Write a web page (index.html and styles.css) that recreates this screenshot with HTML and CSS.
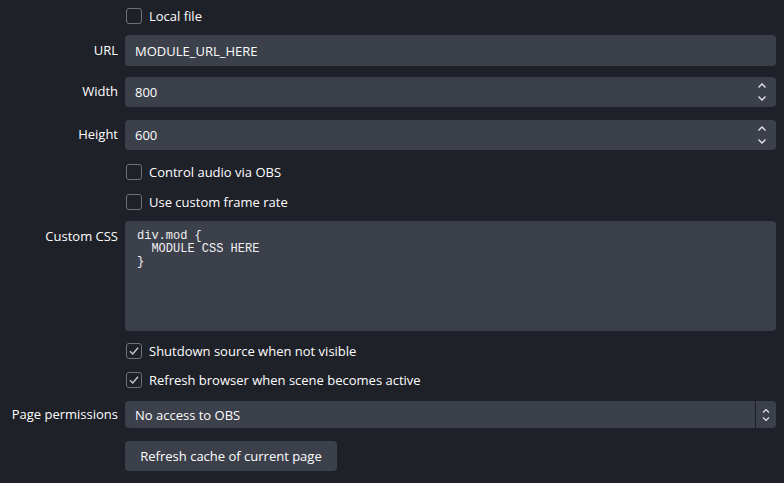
FILE: index.html
```html
<!DOCTYPE html>
<html>
<head>
<meta charset="utf-8">
<link rel="stylesheet" href="styles.css">
</head>
<body>
<div class="form">
  <div class="row r-local">
    <div class="label"></div>
    <label class="check"><span class="box"></span><span>Local file</span></label>
  </div>
  <div class="row r-url">
    <div class="label">URL</div>
    <div class="field">MODULE_URL_HERE</div>
  </div>
  <div class="row r-width">
    <div class="label up">Width</div>
    <div class="field spin">800
      <span class="arrows">
        <svg width="10" height="22" viewBox="0 0 10 22"><path d="M1.5 6.5 L5 3 L8.5 6.5" fill="none" stroke="#e6e6e6" stroke-width="1.3"/><path d="M1.5 15.5 L5 19 L8.5 15.5" fill="none" stroke="#e6e6e6" stroke-width="1.3"/></svg>
      </span>
    </div>
  </div>
  <div class="row r-height">
    <div class="label up">Height</div>
    <div class="field spin">600
      <span class="arrows">
        <svg width="10" height="22" viewBox="0 0 10 22"><path d="M1.5 6.5 L5 3 L8.5 6.5" fill="none" stroke="#e6e6e6" stroke-width="1.3"/><path d="M1.5 15.5 L5 19 L8.5 15.5" fill="none" stroke="#e6e6e6" stroke-width="1.3"/></svg>
      </span>
    </div>
  </div>
  <div class="row r-audio">
    <div class="label"></div>
    <label class="check"><span class="box"></span><span>Control audio via OBS</span></label>
  </div>
  <div class="row r-fps">
    <div class="label"></div>
    <label class="check"><span class="box"></span><span>Use custom frame rate</span></label>
  </div>
  <div class="row r-css">
    <div class="label top">Custom CSS</div>
    <div class="field area"><pre>div.mod {
  MODULE CSS HERE
}</pre></div>
  </div>
  <div class="row r-shut">
    <div class="label"></div>
    <label class="check"><span class="box on"><svg width="12" height="12" viewBox="0 0 12 12"><path d="M2 6.2 L4.8 9 L10 2.8" fill="none" stroke="#c8c8c8" stroke-width="1.4"/></svg></span><span>Shutdown source when not visible</span></label>
  </div>
  <div class="row r-refresh">
    <div class="label"></div>
    <label class="check"><span class="box on"><svg width="12" height="12" viewBox="0 0 12 12"><path d="M2 6.2 L4.8 9 L10 2.8" fill="none" stroke="#c8c8c8" stroke-width="1.4"/></svg></span><span>Refresh browser when scene becomes active</span></label>
  </div>
  <div class="row r-perm">
    <div class="label">Page permissions</div>
    <div class="field select"><span class="sel-text">No access to OBS</span>
      <span class="sel-btn"><svg width="10" height="16" viewBox="0 0 10 16"><path d="M2 5.5 L5 2.5 L8 5.5" fill="none" stroke="#e6e6e6" stroke-width="1.2"/><path d="M2 10.5 L5 13.5 L8 10.5" fill="none" stroke="#e6e6e6" stroke-width="1.2"/></svg></span>
    </div>
  </div>
  <div class="row r-btn">
    <div class="label"></div>
    <div class="btn-wrap"><button class="btn">Refresh cache of current page</button></div>
  </div>
</div>
</body>
</html>
```

FILE: styles.css
```css
html, body {
  margin: 0;
  padding: 0;
  background: #1f2129;
  width: 784px;
  height: 483px;
  overflow: hidden;
}
body {
  font-family: "Open Sans", "Noto Sans", sans-serif;
  font-size: 13px;
  color: #fefefe;
}
.form {
  display: flex;
  flex-direction: column;
  padding-right: 8px;
}
.row {
  display: flex;
  align-items: center;
  gap: 7px;
}
.label {
  width: 118px;
  flex: none;
  text-align: right;
  padding-bottom: 1px;
}
.label.up {
  padding-bottom: 3px;
}
.label.top {
  align-self: flex-start;
  padding-top: 6px;
}
.field {
  flex: 1;
  background: #3c404b;
  border-radius: 4px;
  height: 100%;
  box-sizing: border-box;
  display: flex;
  align-items: center;
  padding-left: 10px;
}
.arrows {
  margin-left: auto;
  margin-right: 9px;
  display: flex;
}
.area {
  align-items: flex-start;
  padding: 9px 12px;
}
.area pre {
  margin: 0;
  font-family: "Liberation Mono", "Courier New", monospace;
  font-size: 12px;
  line-height: 13px;
  color: #f0f0f0;
}
.select {
  padding-left: 10px;
  padding-right: 0;
}
.sel-btn {
  margin-left: auto;
  width: 20px;
  height: 100%;
  border-left: 1px solid #1f2129;
  display: flex;
  align-items: center;
  justify-content: center;
}
.check {
  display: flex;
  align-items: center;
  gap: 7px;
  margin-left: 1px;
}
.box {
  width: 16px;
  height: 16px;
  box-sizing: border-box;
  border: 1px solid #6e717a;
  border-radius: 3px;
  display: flex;
  align-items: center;
  justify-content: center;
}
.btn-wrap { display: flex; height: 100%; }
.btn {
  font: inherit;
  color: #fefefe;
  background: #3c404b;
  border: none;
  border-radius: 4px;
  padding: 0 15px;
  width: 212px;
  height: 100%;
}
.r-local { height: 32px; }
.r-url { margin-top: 3px; height: 31px; }
.r-width { margin-top: 11px; height: 30px; }
.r-height { margin-top: 13px; height: 30px; }
.r-audio { margin-top: 7px; height: 30px; }
.r-fps { height: 30px; }
.r-css { margin-top: 4px; height: 110px; }
.r-shut { margin-top: 5px; height: 30px; }
.r-refresh { height: 28px; }
.r-perm { margin-top: 7px; height: 27px; }
.r-btn { margin-top: 13px; height: 30px; }
```
